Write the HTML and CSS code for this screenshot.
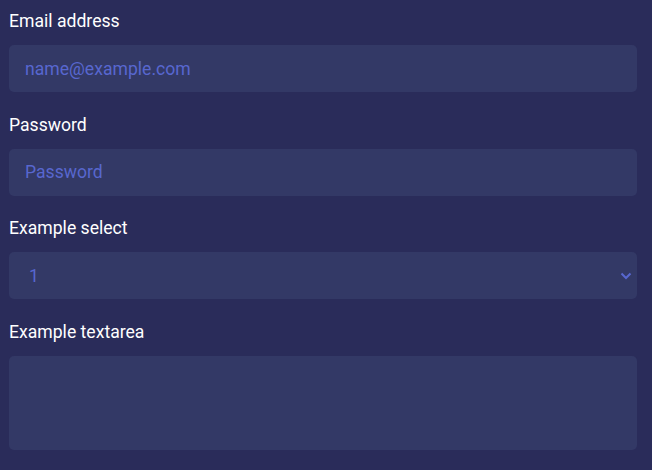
FILE: index.html
```html
<!DOCTYPE html>
<html lang="en">
<head>
    <meta charset="UTF-8">
    <meta name="viewport" content="width=device-width, initial-scale=1.0">
    <title>Form</title>
    <link rel="stylesheet" href="styles.css">
</head>
<body>
    <form class="form">
        <div class="group">
            <label for="email">Email address</label>
            <input type="email" id="email" class="field" placeholder="name@example.com">
        </div>
        <div class="group">
            <label for="password">Password</label>
            <input type="password" id="password" class="field" placeholder="Password">
        </div>
        <div class="group">
            <label for="select">Example select</label>
            <div class="select-wrap">
                <select id="select" class="field select">
                    <option>1</option>
                    <option>2</option>
                    <option>3</option>
                </select>
                <svg class="chevron" width="12" height="8" viewBox="0 0 12 8">
                    <path d="M1.5 1.5 L6 6 L10.5 1.5" fill="none" stroke="#5867cf" stroke-width="2"/>
                </svg>
            </div>
        </div>
        <div class="group">
            <label for="textarea">Example textarea</label>
            <textarea id="textarea" class="field textarea"></textarea>
        </div>
    </form>
</body>
</html>
```

FILE: styles.css
```css
body {
    margin: 0;
    padding: 9px 15px 9px 9px;
    background-color: #2a2c5a;
    font-family: Roboto, "Liberation Sans", sans-serif;
    color: #ffffff;
}
.group {
    display: flex;
    flex-direction: column;
    margin-bottom: 20.67px;
}
.group label {
    font-size: 17.6px;
    line-height: 24px;
    margin-bottom: 12px;
}
.field {
    box-sizing: border-box;
    width: 100%;
    height: 47px;
    padding: 0 16px;
    border: none;
    border-radius: 5px;
    background-color: #333966;
    color: #5867cf;
    font-family: Roboto, "Liberation Sans", sans-serif;
    font-size: 17.6px;
    outline: none;
}
.field::placeholder {
    color: #5867cf;
}
.select-wrap {
    position: relative;
}
.select {
    appearance: none;
    -webkit-appearance: none;
    padding-left: 20px;
}
.chevron {
    position: absolute;
    right: 5px;
    top: 20px;
    pointer-events: none;
}
.textarea {
    height: 94px;
    resize: none;
    padding: 10px 16px;
}
```
